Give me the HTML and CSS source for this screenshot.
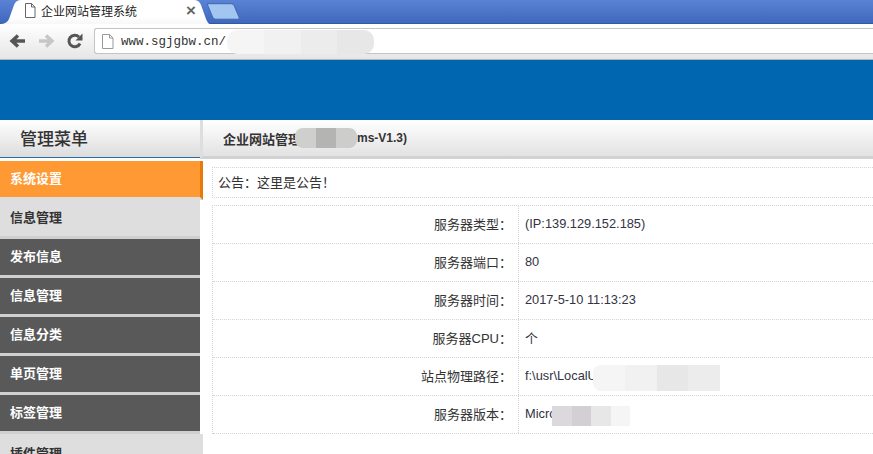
FILE: index.html
```html
<!DOCTYPE html>
<html lang="zh">
<head>
<meta charset="utf-8">
<title>企业网站管理系统</title>
<link rel="stylesheet" href="styles.css">
</head>
<body>
<div class="tabbar">
  <div class="tab">
    <svg class="page-icon" width="12" height="15" viewBox="0 0 12 15"><path d="M1.5.5h6l3.500 3.500v10.500h-9.500z M7.500.5v3.500h3.500" fill="#fff" stroke="#666"/></svg>
    <span class="tab-title">企业网站管理系统</span>
    <span class="tab-close">×</span>
  </div>
  <svg class="newtab" width="34" height="17" viewBox="0 0 34 17"><path d="M.7.7h23.500q2 0 3 2l5 12q.5 1.500-1.500 1.500h-22q-2 0-3-2l-5-12q-.6-1.500.5-1.500z" fill="#a3c6f1" stroke="#3f67b3"/></svg>
</div>
<div class="toolbar">
  <svg class="nav" width="20" height="16" viewBox="0 0 20 16"><path d="M17 8H5M10 2.500 4 8l6 5.500" fill="none" stroke="#555" stroke-width="3.400"/></svg>
  <svg class="nav nav-fwd" width="20" height="16" viewBox="0 0 20 16"><path d="M3 8h12M10 2.500 16 8l-6 5.500" fill="none" stroke="#c6c6c6" stroke-width="3.400"/></svg>
  <svg class="nav nav-reload" width="18" height="18" viewBox="0 0 18 18"><path d="M14 11.500A5.800 5.800 0 1 1 13 5" fill="none" stroke="#555" stroke-width="3"/><path d="M16.500 1.500v7h-7z" fill="#555"/></svg>
  <div class="omnibox">
    <svg class="url-icon" width="12" height="15" viewBox="0 0 12 15"><path d="M.5.5h7l3.500 3.500v10.500h-10.500z M7.500.5v3.500h3.500" fill="#fff" stroke="#999"/></svg>
    <span class="url">www.sgjgbw.cn/</span>
    <span class="blur blur-url"><i class="c0"></i><i class="c1"></i><i class="c2"></i><i class="c3"></i></span>
  </div>
</div>
<div class="banner"></div>
<div class="layout">
  <aside class="sidebar">
    <h2 class="side-title"><span>管理菜单</span></h2>
    <ul class="menu">
      <li class="item active">系统设置</li>
      <li class="item light">信息管理</li>
      <li class="item dark">发布信息</li>
      <li class="item dark">信息管理</li>
      <li class="item dark">信息分类</li>
      <li class="item dark">单页管理</li>
      <li class="item dark">标签管理</li>
      <li class="item light last">插件管理</li>
    </ul>
  </aside>
  <main class="main">
    <div class="main-head">
      <span class="head-cjk">企业网站管理</span>
      <span class="blur-head"><i class="d1"></i><i class="d2"></i><i class="d3"></i></span>
      <span class="head-text">ms-V1.3)</span>
    </div>
    <div class="notice">公告：这里是公告！</div>
    <div class="info">
      <div class="row"><div class="key">服务器类型：</div><div class="val">(IP:139.129.152.185)</div></div>
      <div class="row"><div class="key">服务器端口：</div><div class="val">80</div></div>
      <div class="row"><div class="key">服务器时间：</div><div class="val">2017-5-10 11:13:23</div></div>
      <div class="row"><div class="key">服务器CPU：</div><div class="val">个</div></div>
      <div class="row"><div class="key">站点物理路径：</div><div class="val">f:\usr\LocalUse
        <span class="blur blur-path"><i class="c0"></i><i class="c1"></i><i class="c3"></i><i class="c2"></i></span></div></div>
      <div class="row"><div class="key">服务器版本：</div><div class="val">Micros
        <span class="blur blur-ver"><i class="d4"></i><i class="d5"></i><i class="c3"></i><i class="c0"></i></span></div></div>
    </div>
  </main>
</div>
</body>
</html>
```

FILE: styles.css
```css
* { box-sizing: border-box; }
html, body { margin: 0; height: 454px; overflow: hidden; background: #fff; }
body { font-family: "Liberation Sans", "Noto Sans CJK SC", sans-serif; font-size: 12px; color: #333; }
ul { list-style: none; margin: 0; padding: 0; }
h2 { margin: 0; }

.tabbar { height: 24px; display: flex; align-items: flex-start; background: linear-gradient(#5a83d6, #3f67bb); border-bottom: 1px solid #35599f; }
.tab { width: 210px; height: 24px; flex: none; display: flex; align-items: center; padding: 0 0 3px 24px; background: linear-gradient(#fff 70%, #f7f7f7); clip-path: path("M0 24 Q7 24 9 19 L14 5 Q16 0 21 0 L194 0 Q199 0 201 5 L206 19 Q208 24 210 24 Z"); }
.page-icon { flex: none; }
.tab-title { margin-left: 5px; font-size: 12px; color: #222; white-space: nowrap; }
.tab-close { margin-left: 49px; font-size: 17px; line-height: 1; font-weight: bold; color: #666; }
.newtab { flex: none; margin: 3px 0 0 -3px; }

.toolbar { height: 36px; display: flex; align-items: center; padding: 0 0 1px 8px; background: linear-gradient(#fff, #e6e6e6); border-bottom: 1px solid #b4b4b4; }
.nav { flex: none; }
.nav-fwd { margin-left: 8px; }
.nav-reload { margin-left: 10px; }
.omnibox { position: relative; flex: 1; height: 26px; margin-left: 10px; display: flex; align-items: center; padding-left: 7px; background: #fff; border: 1px solid #c4c4c4; border-right: 0; border-radius: 3px 0 0 3px; }
.url-icon { flex: none; }
.url { margin-left: 7px; padding-top: 1px; font-family: "Liberation Mono", monospace; font-size: 12.500px; color: #333; white-space: nowrap; }

.blur { position: absolute; display: flex; overflow: hidden; }
.blur i, .blur-head i { flex: 1; display: block; }
.blur-url { left: 132px; top: 1px; width: 147px; height: 24px; border-radius: 10px; }
.c0 { background: #f5f5f5; }
.c1 { background: #f1f1f1; }
.c2 { background: #ececec; }
.c3 { background: #e7e7e7; }
.d1 { background: #cfcfcd; }
.d2 { background: #b4b4b2; }
.d3 { background: #cdcdcb; }
.d4 { background: #dbd9dd; }
.d5 { background: #d2d0d3; }

.banner { height: 60px; background: #0066b0; }

.layout { display: flex; align-items: flex-start; }
.sidebar { width: 203px; flex: none; }
.side-title { height: 38px; margin: 0 3px 0 0; padding: 8px 0 0 20px; background: linear-gradient(#fff, #dcdcdc); border-bottom: 1px solid #2a6a9e; font-size: 17px; font-weight: 500; line-height: 24px; color: #333; }
.menu { margin-top: 3px; }
.item { height: 39px; width: 200px; padding: 0 0 0 10px; display: flex; align-items: center; font-size: 13px; font-weight: bold; line-height: 36px; border-bottom: 3px solid #d0d0d0; }
.active { width: 203px; background: #ff9933; color: #fff; border-right: 3px solid #e87a0c; border-bottom-color: #dedede; }
.light { background: #dedede; color: #333; }
.dark { background: #595959; color: #fff; }
.last { width: 203px; border: 0; }

.main { flex: 1; min-width: 0; position: relative; }
.main-head { height: 39px; padding: 0 0 0 20px; display: flex; align-items: center; background: linear-gradient(#fff, #e2e2e2); border-bottom: 3px solid #d2d2d2; border-left: 3px solid #dedede; margin-left: -3px; white-space: nowrap; }
.head-cjk { font-weight: bold; font-size: 13px; color: #333; }
.head-text { font-weight: bold; font-size: 12px; color: #333; }
.blur-head { display: flex; flex: none; width: 62px; height: 20px; margin-left: -6px; border-radius: 8px; overflow: hidden; }

.notice { height: 31px; margin: 8px 0 0 9px; padding: 0 0 2px 5px; display: flex; align-items: center; font-size: 13px; color: #333; border: 1px dotted #d4d4d4; border-right: 0; }

.info { margin: 7px 0 0 9px; border-left: 1px dotted #d4d4d4; border-top: 1px dotted #d4d4d4; }
.row { height: 38px; display: flex; align-items: center; border-bottom: 1px dotted #d4d4d4; }
.key { width: 306px; height: 100%; flex: none; padding: 0 6px 2px 0; display: flex; align-items: center; justify-content: flex-end; font-size: 13px; color: #333; border-right: 1px dotted #d4d4d4; }
.val { position: relative; padding: 0 0 2px 6px; font-size: 12.800px; color: #334; white-space: nowrap; }
.blur-path { left: 74px; top: -3px; width: 127px; height: 26px; border-radius: 8px 0 0 8px; }
.blur-ver { left: 33px; top: 0; width: 78px; height: 20px; }
.blur-path i, .blur-ver i { height: 100%; }
```
